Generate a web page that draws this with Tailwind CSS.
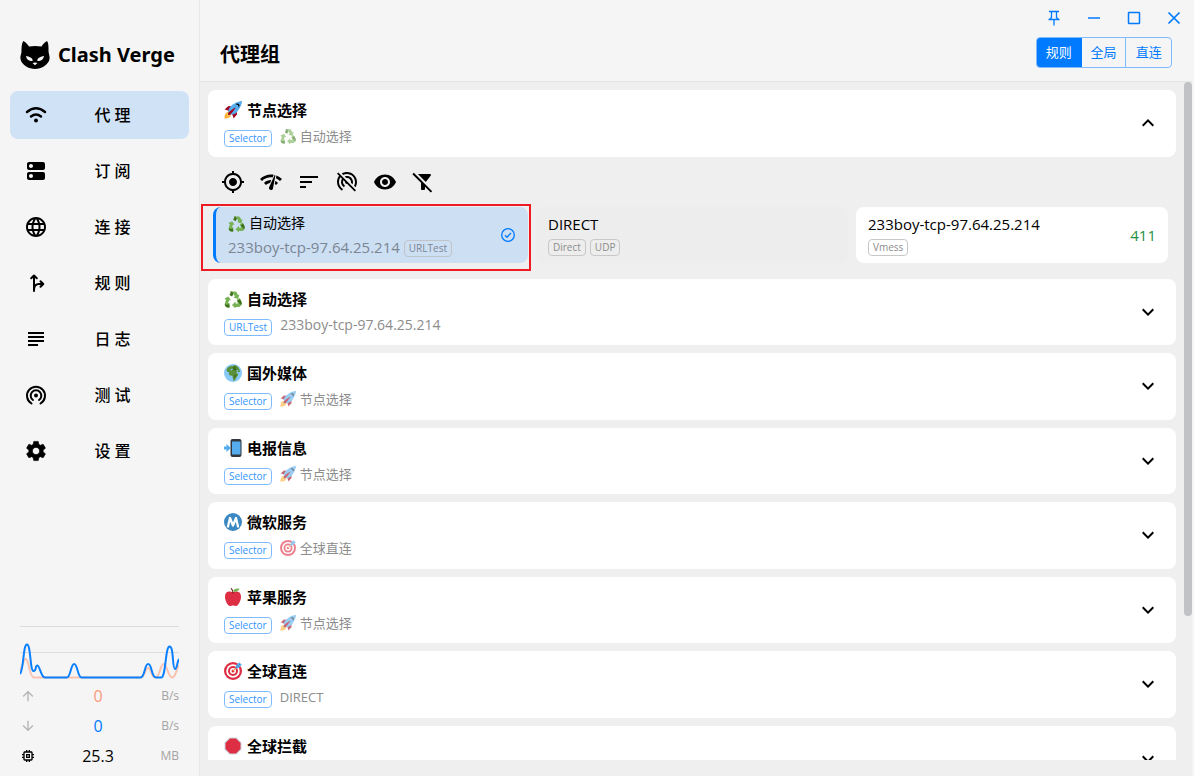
<!DOCTYPE html>
<html lang="zh-CN">
<head>
<meta charset="utf-8">
<title>Clash Verge</title>
<script src="https://cdn.jsdelivr.net/npm/@tailwindcss/browser@4"></script>
</head>
<body class="flex h-screen overflow-hidden bg-[#f5f5f5] font-['Open_Sans','Noto_Sans_CJK_SC',sans-serif] text-black select-none">

<svg class="hidden" aria-hidden="true">
  <symbol id="rocket" viewBox="0 0 36 36">
    <path fill="#A0041E" d="M1 17l8-7 16 1 1 16-7 8s.001-5.999-6-12-12-6-12-6z"/>
    <path fill="#FFAC33" d="M.973 35s-.036-7.979 2.985-11S15 21.187 15 21.187 14.999 29 11.999 32c-3 3-11.026 3-11.026 3z"/>
    <circle fill="#FFCC4D" cx="8.999" cy="27" r="4"/>
    <path fill="#55ACEE" d="M35.999 0s-10 0-22 10c-6 5-6 14-4 16s11 2 16-4c10-12 10-22 10-22z"/>
    <path d="M26.999 5c-1.623 0-3.013.971-3.641 2.36.502-.227 1.055-.36 1.641-.36 2.209 0 4 1.791 4 4 0 .586-.133 1.139-.359 1.640 1.389-.627 2.359-2.017 2.359-3.640 0-2.209-1.791-4-4-4z"/>
    <path fill="#A0041E" d="M8 28s0-4 1-5 13.001-10.999 14-10-9.001 13-10.001 14S8 28 8 28z"/>
  </symbol>
  <symbol id="recycle" viewBox="0 0 36 36">
    <g fill="#77B255">
      <path d="M11 3h11c2 0 3 1 4 3l2 4 3-1-3 9-9-3 3-2-4-7h-2z"/>
      <path d="M1 17l8-4 5 8-3-1-3 6h3v9H8c-3 0-5-2-6-4-1-1-1-3 0-5l2-6z"/>
      <path d="M25 20l6-4 4 8c1 2 0 4-1 6-1 3-3 4-6 4h-5v3l-7-7 7-7v4h5z"/>
    </g>
    <g fill="#3E721D">
      <path d="M14 3c2 0 3 1 4 3l1 2-3 5-5-3z"/>
      <path d="M2 28c1 2 3 1 5 1h4v6H8c-4 0-7-4-6-7z"/>
      <path d="M32 18l3 6c1 3 0 5-1 7-1-3-3-4-5-6l-2-3z"/>
    </g>
  </symbol>
  <symbol id="globe" viewBox="0 0 36 36">
    <circle cx="18" cy="18" r="18" fill="#88C9F9"/>
    <path fill="#5C913B" d="M5 12c0-3 3-6 6-7 3-2 6 0 8-2 3-1 7 0 9 3l3 5 1 4-3 2-3-2-1 3 3 2c1 3-2 4-3 7l-3 5c-1 2-3 2-4-1l-1-7c-2-1-4 0-6-2s-2-4 0-6c-3 0-4 2-6-4z"/>
    <path fill="#3E721D" d="M18 6l4-2 3 3-2 2 3 2-2 3-5-2-3 1zM21 20l4 2-3 6-2-1z"/>
    <path fill="#88C9F9" d="M13 11l4-2 1 2-4 2zM25 12l4 1-1 2-3-1z"/>
  </symbol>
  <symbol id="phone" viewBox="0 0 36 36">
    <path fill="#31373D" d="M13 4a4 4 0 0 1 4-4h14a4 4 0 0 1 4 4v28a4 4 0 0 1-4 4H17a4 4 0 0 1-4-4z"/>
    <path fill="#55ACEE" d="M16 5h17v26H16zM5 10l9 8-9 8v-5H0v-6h5z"/>
  </symbol>
  <symbol id="metro" viewBox="0 0 36 36">
    <circle cx="18" cy="18" r="18" fill="#3B88C3"/>
    <path fill="none" stroke="#fff" stroke-width="4.500" stroke-linecap="round" stroke-linejoin="round" d="M8 27l4-17 6 15 6-15 4 17"/>
  </symbol>
  <symbol id="target" viewBox="0 0 36 36">
    <circle cx="18" cy="18" r="18" fill="#DD2E44"/><circle cx="18" cy="18" r="13.500" fill="#fff"/>
    <circle cx="18" cy="18" r="10" fill="#DD2E44"/><circle cx="18" cy="18" r="6" fill="#fff"/>
    <circle cx="18" cy="18" r="3" fill="#DD2E44"/>
    <path stroke="#FFAC33" stroke-width="2" d="M18 18l9-9"/>
    <path fill="#55ACEE" d="M24 7l7-7 1 4 4 1-7 7-6 1z"/>
    <path stroke="#3A87C2" stroke-width="1.500" d="M24 12l9-9"/>
  </symbol>
  <symbol id="apple" viewBox="0 0 36 36">
    <path fill="#DD2E44" d="M24 7c-3 0-3 1-6 1s-5-1-7-1c-4 0-9 2-9 11 0 8 6 18 10 18 3 0 3-1 6-1s3 1 6 1c4 0 10-10 10-18 0-9-5-11-10-11z"/>
    <path fill="#662113" d="M17 11c0-4-1-7-4-10l2-1c3 3 4 7 4 11z"/>
    <path fill="#77B255" d="M18 7c1-5 6-7 13-6-2 5-7 8-13 6z"/>
  </symbol>
  <symbol id="stop" viewBox="0 0 36 36">
    <path fill="#CCD6DD" d="M11 1h14l10 10v14L25 35H11L1 25V11z"/>
    <path fill="#DD2E44" d="M12 3h12l9 9v12l-9 9H12l-9-9V12z"/>
  </symbol>
  <symbol id="down" viewBox="0 0 24 24"><path d="M16.590 8.590L12 13.170 7.410 8.590 6 10l6 6 6-6z"/></symbol>
  <symbol id="arrow" viewBox="0 0 24 24"><path d="M4 12l1.410 1.410L11 7.830V20h2V7.830l5.580 5.590L20 12l-8-8-8 8z"/></symbol>
</svg>

<aside class="flex w-[200px] shrink-0 flex-col border-r border-[#e8e8e8] px-[10px] pt-9">
  <div class="flex h-[37px] items-center gap-2 px-[10px]">
    <svg class="h-[30px] w-[30px] shrink-0" viewBox="0 0 30 30">
      <path fill-rule="evenodd" d="M3.400 1C5.500 1.800 7.400 4.400 9 6.500Q15 5.500 21.500 6.500C23 4.400 25 1.800 27 1C28.800 3 28.500 9 28.600 12C29 15 30 16.500 29.500 19C28.500 25 21 29 15 29S1.500 25 .5 19C0 16.500 1 15 1.500 12C1.500 9 1.500 3 3.400 1zM6 15.800C6.500 20 9 21.500 12.700 20.700C12.700 17.500 9 17 6 15.800zM24 15.800C21 17 17.300 17.500 17.300 20.700C21 21.500 23.500 20 24 15.800zM12.500 23Q15 22 17.500 23L15 25.300z"/>
    </svg>
    <h1 class="font-['Noto_Sans'] text-[20px] leading-6 font-bold whitespace-nowrap">Clash Verge</h1>
  </div>

  <nav class="mt-[18px] flex flex-col gap-2 text-base font-medium [&>a]:flex [&>a]:h-12 [&>a]:items-center [&>a]:rounded-lg [&>a]:pl-[14px] [&_span]:flex-1 [&_span]:pr-3 [&_span]:text-center [&_svg]:size-6 [&_svg]:shrink-0">
    <a href="#proxies" class="bg-[#d0e2f6]" aria-current="page">
      <svg viewBox="0 0 24 24" fill="none" stroke="#000" stroke-width="2.400" stroke-linecap="round"><path d="M3 9Q12 1.500 21 9M7 13.500Q12 9.500 17 13.500"/><circle cx="12" cy="17.500" r="2" fill="#000" stroke="none"/></svg>
      <span>代 理</span></a>
    <a href="#profiles">
      <svg viewBox="0 0 24 24"><path d="M19 13H5c-1.100 0-2 .9-2 2v4c0 1.100.9 2 2 2h14c1.100 0 2-.9 2-2v-4c0-1.100-.9-2-2-2zM7 19c-1.100 0-2-.9-2-2s.9-2 2-2 2 .9 2 2-.9 2-2 2zM19 3H5c-1.100 0-2 .9-2 2v4c0 1.100.9 2 2 2h14c1.100 0 2-.9 2-2V5c0-1.100-.9-2-2-2zM7 9c-1.100 0-2-.9-2-2s.9-2 2-2 2 .9 2 2-.9 2-2 2z"/></svg>
      <span>订 阅</span></a>
    <a href="#connections">
      <svg viewBox="0 0 24 24"><path d="M11.990 2C6.470 2 2 6.480 2 12s4.470 10 9.990 10C17.520 22 22 17.520 22 12S17.520 2 11.990 2zm6.930 6h-2.950c-.32-1.250-.78-2.450-1.380-3.560 1.840.63 3.370 1.910 4.330 3.560zM12 4.040c.83 1.200 1.480 2.530 1.910 3.960h-3.820c.43-1.430 1.080-2.760 1.910-3.960zM4.260 14C4.100 13.360 4 12.690 4 12s.1-1.360.26-2h3.380c-.08.66-.14 1.320-.14 2s.06 1.340.14 2H4.260zm.82 2h2.950c.32 1.250.78 2.450 1.380 3.560-1.840-.63-3.370-1.900-4.330-3.560zm2.950-8H5.080c.96-1.660 2.490-2.930 4.330-3.560C8.810 5.550 8.350 6.750 8.030 8zM12 19.960c-.83-1.200-1.480-2.530-1.910-3.960h3.820c-.43 1.430-1.080 2.760-1.910 3.960zM14.340 14H9.660c-.09-.66-.16-1.320-.16-2s.07-1.350.16-2h4.680c.09.65.16 1.320.16 2s-.07 1.340-.16 2zm.25 5.560c.6-1.110 1.060-2.310 1.380-3.560h2.950c-.96 1.650-2.490 2.930-4.330 3.560zM16.360 14c.08-.66.14-1.320.14-2s-.06-1.340-.14-2h3.380c.16.64.26 1.310.26 2s-.1 1.360-.26 2h-3.380z"/></svg>
      <span>连 接</span></a>
    <a href="#rules">
      <svg viewBox="0 0 24 24" fill="none" stroke="#000" stroke-width="2" stroke-linecap="round" stroke-linejoin="round"><path d="M10 20V5M7.200 7.300L10 4.500l2.800 2.800M10 19c0-4 2-6 5-6h4M16.500 10.200l2.800 2.800-2.800 2.800"/></svg>
      <span>规 则</span></a>
    <a href="#logs">
      <svg viewBox="0 0 24 24"><path d="M14 17H4v2h10v-2zm6-8H4v2h16V9zM4 15h16v-2H4v2zM4 5v2h16V5H4z"/></svg>
      <span>日 志</span></a>
    <a href="#test">
      <svg viewBox="0 0 24 24"><path d="M12 10.500a2 2 0 1 0 0 4 2 2 0 0 0 0-4z"/><path fill="none" stroke="#000" stroke-width="2" stroke-linecap="round" d="M9 17a5.300 5.300 0 1 1 6 0M7.500 20.500a9 9 0 1 1 9 0"/></svg>
      <span>测 试</span></a>
    <a href="#settings">
      <svg viewBox="0 0 24 24"><path d="M19.140 12.940c.04-.3.06-.61.06-.94 0-.32-.02-.64-.07-.94l2.030-1.580c.18-.14.23-.41.12-.61l-1.920-3.320c-.12-.22-.37-.29-.59-.22l-2.390.96c-.5-.38-1.030-.7-1.620-.94l-.36-2.540c-.04-.24-.24-.41-.48-.41h-3.840c-.24 0-.43.17-.47.41l-.36 2.540c-.59.24-1.130.57-1.620.94l-2.390-.96c-.22-.08-.47 0-.59.22L2.740 8.870c-.12.21-.08.47.12.61l2.030 1.580c-.05.3-.09.63-.09.94s.02.64.07.94l-2.030 1.580c-.18.14-.23.41-.12.61l1.920 3.320c.12.22.37.29.59.22l2.390-.96c.5.38 1.030.7 1.620.94l.36 2.540c.05.24.24.41.48.41h3.840c.24 0 .44-.17.47-.41l.36-2.540c.59-.24 1.130-.56 1.620-.94l2.390.96c.22.08.47 0 .59-.22l1.920-3.320c.12-.22.07-.47-.12-.61l-2.010-1.580zM12 15.600c-1.980 0-3.600-1.620-3.600-3.600s1.620-3.600 3.600-3.600 3.600 1.620 3.600 3.600-1.620 3.600-3.600 3.600z" stroke="#000" stroke-width=".6" stroke-linejoin="round"/></svg>
      <span>设 置</span></a>
  </nav>

  <div class="mx-[10px] mt-auto border-t border-[#dcdcdc] pt-4 pb-[5px]">
    <svg class="h-9 w-full" viewBox="0 0 160 36" preserveAspectRatio="none" fill="none">
      <path stroke="#dcdcdc" d="M0 9.500H160"/>
      <path stroke="#f9c3b2" stroke-width="2" d="M0 27C3 24 3 16 6 16S9 34 14 34.500H122C125 34.500 126 25 129 25S132 34.500 136 34.500C141 34.500 141 21 144.500 21S149 34.500 153 34.500S157 26 160 22"/>
      <path stroke="#0a80ff" stroke-width="2" d="M0 31C4 26 3 1.500 7 1.500S10 28 13.500 28S15 22.500 17.500 22.500S21 34.500 25 34.500H47C51 34.500 51 21 54.500 21S58 34.500 62 34.500H121C126 34.500 125 21 129 21S132 34.500 137 34.500H142C147 34.500 146 3.500 150.500 3.500C155 3.500 153 26 156 26C158 26 158 19 160 16"/>
    </svg>
    <dl class="mt-0.5 text-base leading-[30px] [&>div]:grid [&>div]:grid-cols-[16px_1fr_30px] [&>div]:items-center [&_dd]:text-center [&_svg]:size-4">
      <div><dt aria-label="上传"><svg viewBox="0 0 24 24" fill="#b4b4b4"><use href="#arrow"/></svg></dt><dd class="pl-[11px] text-[#fb9a79]">0</dd><dd class="text-xs leading-[30px] whitespace-nowrap text-[#a3a3a3]"><span class="block text-right">B/s</span></dd></div>
      <div><dt aria-label="下载"><svg class="rotate-180" viewBox="0 0 24 24" fill="#b4b4b4"><use href="#arrow"/></svg></dt><dd class="pl-[11px] text-[#007aff]">0</dd><dd class="text-xs leading-[30px] whitespace-nowrap text-[#a3a3a3]"><span class="block text-right">B/s</span></dd></div>
      <div><dt aria-label="内存"><svg viewBox="0 0 24 24"><path d="M15 9H9v6h6V9zm-2 4h-2v-2h2v2zm8-2V9h-2V7c0-1.100-.9-2-2-2h-2V3h-2v2h-2V3H9v2H7c-1.100 0-2 .9-2 2v2H3v2h2v2H3v2h2v2c0 1.100.9 2 2 2h2v2h2v-2h2v2h2v-2h2c1.100 0 2-.9 2-2v-2h2v-2h-2v-2h2zm-4 6H7V7h10v10z"/></svg></dt><dd class="pl-[11px]">25.3</dd><dd class="text-xs leading-[30px] whitespace-nowrap text-[#a3a3a3]"><span class="block text-right">MB</span></dd></div>
    </dl>
  </div>
</aside>

<div class="flex min-w-0 flex-1 flex-col">
  <header class="mr-0.5 flex h-[82px] shrink-0 flex-col border-b border-[#e5e5e5]">
    <div class="-mr-0.5 flex h-9 shrink-0 justify-end text-[#007aff] [&>button]:flex [&>button]:w-10 [&>button]:items-center [&>button]:justify-center [&_svg]:size-4">
      <button aria-label="置顶"><svg viewBox="0 0 16 16" fill="none" stroke="currentColor" stroke-width="1.300"><path d="M3 1.500h10M5.500 1.500v6.500M10.500 1.500v6.500M2.500 9.500h11M8 9.500V15.500M5.500 7.500l-2 2M10.500 7.500l2 2"/></svg></button>
      <button aria-label="最小化"><svg viewBox="0 0 16 16" fill="none" stroke="currentColor" stroke-width="1.500"><path d="M2 8h12"/></svg></button>
      <button aria-label="最大化"><svg viewBox="0 0 16 16" fill="none" stroke="currentColor" stroke-width="1.500"><rect x="2.500" y="2.500" width="11" height="11" rx=".5"/></svg></button>
      <button aria-label="关闭"><svg viewBox="0 0 16 16" fill="none" stroke="currentColor" stroke-width="1.700"><path d="M2.500 2.500l11 11M13.500 2.500l-11 11"/></svg></button>
    </div>
    <div class="flex items-start justify-between px-5 pt-px">
      <h2 class="text-[20px] leading-9 font-bold">代理组</h2>
      <div class="grid h-[31px] w-[136px] grid-cols-3 overflow-hidden rounded border border-[#7fbcff] text-[13px] text-[#007aff]">
        <button class="-my-px -ml-px bg-[#007aff] text-white">规则</button>
        <button class="border-r border-[#7fbcff]">全局</button>
        <button>直连</button>
      </div>
    </div>
  </header>

  <main class="relative mr-0.5 min-h-0 flex-1 bg-[#efefef] pb-4">
    <div class="h-full overflow-hidden pt-2 pr-4 pl-2">
      <section>
        <button aria-expanded="true" class="flex min-h-[67px] w-full items-center justify-between rounded-lg bg-white px-4 pb-px text-left">
          <span>
            <span class="flex items-center gap-[5px] text-[15px] leading-6 font-bold"><svg class="size-[18px]"><use href="#rocket"/></svg>节点选择</span>
            <span class="flex items-center gap-2 pt-[3px] pb-px text-[13px] leading-[22px] text-[#8c8c8c]"><span class="mt-1 rounded border border-[#7fbcff] px-1 text-[10px] leading-[15px] text-[#3395ff]">Selector</span><span class="flex items-center gap-1"><svg class="size-4 opacity-60"><use href="#recycle"/></svg>自动选择</span></span>
          </span>
          <svg class="size-6 rotate-180"><use href="#down"/></svg>
        </button>

        <div class="flex h-[50px] items-center gap-[14px] pl-[13px] [&_svg]:size-6">
          <button aria-label="定位"><svg viewBox="0 0 24 24"><path d="M12 8c-2.210 0-4 1.790-4 4s1.790 4 4 4 4-1.790 4-4-1.790-4-4-4zm8.940 3c-.46-4.170-3.770-7.480-7.940-7.940V1h-2v2.060C6.830 3.520 3.520 6.830 3.060 11H1v2h2.060c.46 4.170 3.770 7.480 7.940 7.940V23h2v-2.060c4.170-.46 7.480-3.770 7.940-7.940H23v-2h-2.060zM12 19c-3.870 0-7-3.130-7-7s3.130-7 7-7 7 3.130 7 7-3.130 7-7 7z"/></svg></button>
          <button aria-label="延迟测试"><svg viewBox="0 0 24 24"><path d="M15.900 5c-.17 0-.32.09-.41.23l-.07.15-5.180 11.650c-.16.29-.26.61-.26.96 0 1.110.9 2.010 2.010 2.010.96 0 1.770-.68 1.960-1.590l.01-.03L16.400 5.500c0-.28-.22-.5-.5-.5zM1 9l2 2c2.880-2.880 6.790-4.080 10.530-3.620l1.190-2.680C9.890 3.840 4.740 5.270 1 9zm20 2l2-2c-1.640-1.640-3.550-2.820-5.590-3.570l-.53 2.820c1.500.62 2.900 1.530 4.120 2.750zm-4 4l2-2c-.8-.8-1.700-1.420-2.660-1.890l-.55 2.920c.42.27.83.59 1.210.97zM5 13l2 2c1.130-1.130 2.560-1.790 4.030-2l1.280-2.880c-2.630-.08-5.300.87-7.310 2.880z"/></svg></button>
          <button aria-label="排序"><svg viewBox="0 0 24 24"><path d="M3 18h6v-2H3v2zM3 6v2h18V6H3zm0 7h12v-2H3v2z"/></svg></button>
          <button aria-label="测试链接"><svg viewBox="0 0 24 24"><path d="M17.560 14.240c.28-.69.44-1.450.44-2.240 0-3.310-2.690-6-6-6-.79 0-1.550.16-2.240.44l1.620 1.620c.2-.03.41-.06.62-.06 2.210 0 4 1.790 4 4 0 .21-.02.42-.05.63l1.610 1.610zM12 4c4.420 0 8 3.580 8 8 0 1.350-.35 2.620-.95 3.740l1.470 1.470C21.460 15.690 22 13.910 22 12c0-5.520-4.480-10-10-10-1.910 0-3.690.55-5.210 1.470l1.460 1.460C9.370 4.340 10.650 4 12 4zM3.270 2.500L2 3.770l2.100 2.100C2.790 7.570 2 9.690 2 12c0 3.700 2.010 6.920 4.990 8.650l1-1.730C5.610 17.530 4 14.960 4 12c0-1.760.57-3.380 1.530-4.690l1.430 1.440C6.360 9.680 6 10.800 6 12c0 2.220 1.210 4.150 3 5.190l1-1.740c-1.190-.7-2-1.970-2-3.450 0-.65.17-1.250.44-1.790l1.580 1.580L10 12c0 1.100.9 2 2 2l.21-.02.01.01 7.510 7.510L21 20.230 4.270 3.500l-1-1z"/></svg></button>
          <button aria-label="详情"><svg viewBox="0 0 24 24"><path d="M12 4.500C7 4.500 2.730 7.610 1 12c1.730 4.390 6 7.500 11 7.500s9.270-3.110 11-7.500c-1.730-4.390-6-7.500-11-7.500zM12 17c-2.760 0-5-2.240-5-5s2.240-5 5-5 5 2.240 5 5-2.240 5-5 5zm0-8c-1.660 0-3 1.340-3 3s1.340 3 3 3 3-1.340 3-3-1.340-3-3-3z"/></svg></button>
          <button aria-label="过滤"><svg viewBox="0 0 24 24"><path d="M19.790 5.610C20.300 4.950 19.830 4 19 4H6.830l7.970 7.970 4.990-6.360zM2.810 2.810L1.390 4.220 10 12.830V19c0 .55.45 1 1 1h2c.55 0 1-.45 1-1v-2.170l5.780 5.780 1.410-1.410L2.810 2.810z"/></svg></button>
        </div>

        <div class="grid grid-cols-3 gap-2 px-2 [&>button]:h-14 [&>button]:rounded-lg [&>button]:text-left">
          <button class="relative -ml-[3px] flex items-center justify-between border-l-3 border-[#007aff] bg-[#cddff3] pr-3 pl-3" aria-pressed="true">
            <span>
              <span class="flex items-center gap-1 text-sm leading-6"><svg class="size-[17px]"><use href="#recycle"/></svg>自动选择</span>
              <span class="flex items-center gap-1 text-[15px] leading-6 text-[#7b8693]">233boy-tcp-97.64.25.214<span class="mt-0.5 rounded border border-[#bfc4ca] px-1 text-[10px] leading-[15px]">URLTest</span></span>
            </span>
            <svg class="size-4" viewBox="0 0 16 16" fill="none" stroke="#007aff" stroke-width="1.300"><circle cx="8" cy="8" r="6.300"/><path d="M5 8.200l2 2L11 6"/></svg>
            <span class="pointer-events-none absolute -top-[3px] -right-[3px] -bottom-2 -left-[15px] border-2 border-[#ed1c24]"></span>
          </button>
          <button class="flex flex-col justify-center gap-1 bg-[#ededed] px-3 pb-0.5">
            <span class="text-[15px] leading-[22px]">DIRECT</span>
            <span class="flex gap-1 text-[10px] leading-[15px] text-[#8c8c8c]"><span class="rounded border border-[#c8c8c8] px-1">Direct</span><span class="rounded border border-[#c8c8c8] px-1">UDP</span></span>
          </button>
          <button class="flex items-center justify-between bg-white px-3">
            <span class="flex flex-col gap-1 pb-0.5">
              <span class="text-[15px] leading-[22px]">233boy-tcp-97.64.25.214</span>
              <span class="flex text-[10px] leading-[15px] text-[#8c8c8c]"><span class="rounded border border-[#c8c8c8] px-1">Vmess</span></span>
            </span>
            <span class="text-[15px] text-[#1f8f43]">411</span>
          </button>
        </div>
      </section>

      <div class="mt-4 flex flex-col gap-2 [&>button]:flex [&>button]:min-h-[66px] [&>button]:w-full [&>button]:items-center [&>button]:justify-between [&>button]:rounded-lg [&>button]:bg-white [&>button]:px-4 [&>button]:text-left [&>button:nth-child(even)]:min-h-[67px] [&>button:nth-child(even)]:pb-px">
        <button aria-expanded="false">
          <span>
            <span class="flex items-center gap-[5px] text-[15px] leading-6 font-bold"><svg class="size-[18px]"><use href="#recycle"/></svg>自动选择</span>
            <span class="flex items-center gap-2 pt-[3px] pb-px text-sm leading-[22px] text-[#8c8c8c]"><span class="mt-1 rounded border border-[#7fbcff] px-1 text-[10px] leading-[15px] text-[#3395ff]">URLTest</span>233boy-tcp-97.64.25.214</span>
          </span>
          <svg class="size-6"><use href="#down"/></svg>
        </button>
        <button aria-expanded="false">
          <span>
            <span class="flex items-center gap-[5px] text-[15px] leading-6 font-bold"><svg class="size-[18px]"><use href="#globe"/></svg>国外媒体</span>
            <span class="flex items-center gap-2 pt-[3px] pb-px text-[13px] leading-[22px] text-[#8c8c8c]"><span class="mt-1 rounded border border-[#7fbcff] px-1 text-[10px] leading-[15px] text-[#3395ff]">Selector</span><span class="flex items-center gap-1"><svg class="size-4 opacity-60"><use href="#rocket"/></svg>节点选择</span></span>
          </span>
          <svg class="size-6"><use href="#down"/></svg>
        </button>
        <button aria-expanded="false">
          <span>
            <span class="flex items-center gap-[5px] text-[15px] leading-6 font-bold"><svg class="size-[18px]"><use href="#phone"/></svg>电报信息</span>
            <span class="flex items-center gap-2 pt-[3px] pb-px text-[13px] leading-[22px] text-[#8c8c8c]"><span class="mt-1 rounded border border-[#7fbcff] px-1 text-[10px] leading-[15px] text-[#3395ff]">Selector</span><span class="flex items-center gap-1"><svg class="size-4 opacity-60"><use href="#rocket"/></svg>节点选择</span></span>
          </span>
          <svg class="size-6"><use href="#down"/></svg>
        </button>
        <button aria-expanded="false">
          <span>
            <span class="flex items-center gap-[5px] text-[15px] leading-6 font-bold"><svg class="size-[18px]"><use href="#metro"/></svg>微软服务</span>
            <span class="flex items-center gap-2 pt-[3px] pb-px text-[13px] leading-[22px] text-[#8c8c8c]"><span class="mt-1 rounded border border-[#7fbcff] px-1 text-[10px] leading-[15px] text-[#3395ff]">Selector</span><span class="flex items-center gap-1"><svg class="size-4 opacity-60"><use href="#target"/></svg>全球直连</span></span>
          </span>
          <svg class="size-6"><use href="#down"/></svg>
        </button>
        <button aria-expanded="false">
          <span>
            <span class="flex items-center gap-[5px] text-[15px] leading-6 font-bold"><svg class="size-[18px]"><use href="#apple"/></svg>苹果服务</span>
            <span class="flex items-center gap-2 pt-[3px] pb-px text-[13px] leading-[22px] text-[#8c8c8c]"><span class="mt-1 rounded border border-[#7fbcff] px-1 text-[10px] leading-[15px] text-[#3395ff]">Selector</span><span class="flex items-center gap-1"><svg class="size-4 opacity-60"><use href="#rocket"/></svg>节点选择</span></span>
          </span>
          <svg class="size-6"><use href="#down"/></svg>
        </button>
        <button aria-expanded="false">
          <span>
            <span class="flex items-center gap-[5px] text-[15px] leading-6 font-bold"><svg class="size-[18px]"><use href="#target"/></svg>全球直连</span>
            <span class="flex items-center gap-2 pt-[3px] pb-px text-[13px] leading-[22px] text-[#8c8c8c]"><span class="mt-1 rounded border border-[#7fbcff] px-1 text-[10px] leading-[15px] text-[#3395ff]">Selector</span>DIRECT</span>
          </span>
          <svg class="size-6"><use href="#down"/></svg>
        </button>
        <button aria-expanded="false">
          <span class="pb-[26px]">
            <span class="flex items-center gap-[5px] text-[15px] leading-6 font-bold"><svg class="size-[18px]"><use href="#stop"/></svg>全球拦截</span>
          </span>
          <svg class="size-6"><use href="#down"/></svg>
        </button>
      </div>
    </div>
    <div class="absolute top-0 right-0 h-[77%] w-2 rounded-full bg-[#c1c2c5]"></div>
  </main>
</div>
</body>
</html>
